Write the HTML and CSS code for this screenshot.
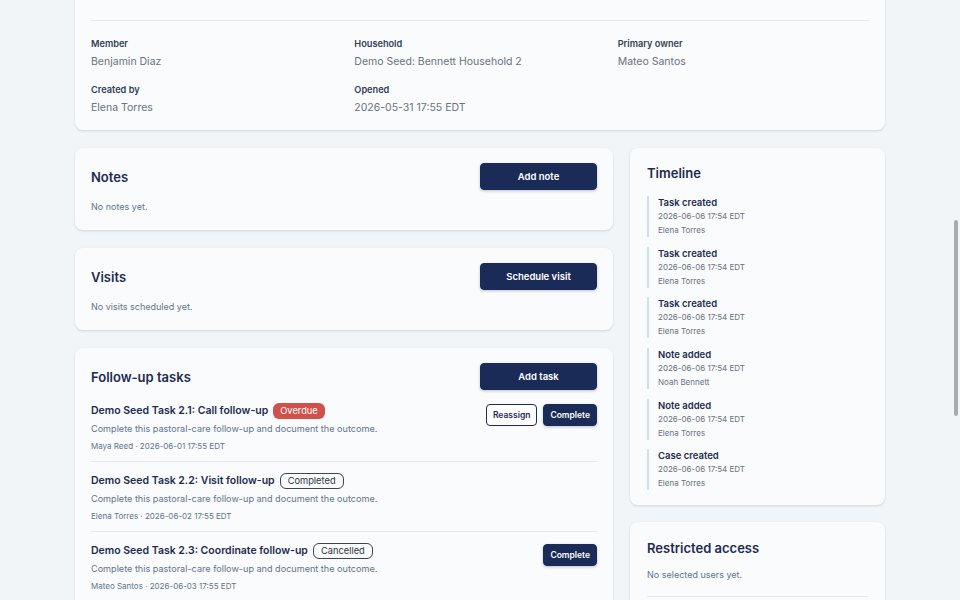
FILE: index.html
```html
<!DOCTYPE html>
<html>

<head>
  <title>Case - Benjamin Diaz</title>
  <link rel="stylesheet" href="styles.css">
</head>

<body>
  <div class="page">
    <div class="crumbs">Pastoral care / Cases / Benjamin Diaz</div>

    <div class="card case-card">
      <div class="case-head">
        <div>
          <h1 class="case-title">Follow-up for Benjamin Diaz</h1>
          <p class="case-sub">Pastoral care case opened after a recent hospital stay.</p>
        </div>
        <span class="pill pill-outline">Open</span>
      </div>
      <hr class="case-divider">
      <div class="details">
        <div class="field">
          <div class="field-label">Member</div>
          <div class="field-value">Benjamin Diaz</div>
        </div>
        <div class="field">
          <div class="field-label">Household</div>
          <div class="field-value">Demo Seed: Bennett Household 2</div>
        </div>
        <div class="field">
          <div class="field-label">Primary owner</div>
          <div class="field-value">Mateo Santos</div>
        </div>
        <div class="field">
          <div class="field-label">Created by</div>
          <div class="field-value">Elena Torres</div>
        </div>
        <div class="field">
          <div class="field-label">Opened</div>
          <div class="field-value">2026-05-31 17:55 EDT</div>
        </div>
      </div>
    </div>

    <div class="columns">
      <div class="col">
        <div class="card section">
          <div class="section-head">
            <h2>Notes</h2>
            <button class="btn btn-primary btn-wide">Add note</button>
          </div>
          <p class="empty">No notes yet.</p>
        </div>

        <div class="card section">
          <div class="section-head">
            <h2>Visits</h2>
            <button class="btn btn-primary btn-wide">Schedule visit</button>
          </div>
          <p class="empty">No visits scheduled yet.</p>
        </div>

        <div class="card section">
          <div class="section-head">
            <h2>Follow-up tasks</h2>
            <button class="btn btn-primary btn-wide">Add task</button>
          </div>
          <ul class="tasks">
            <li class="task">
              <div class="task-main">
                <div class="task-title">Demo Seed Task 2.1: Call follow-up <span class="pill pill-red">Overdue</span></div>
                <div class="task-desc">Complete this pastoral-care follow-up and document the outcome.</div>
                <div class="task-meta">Maya Reed · 2026-06-01 17:55 EDT</div>
              </div>
              <div class="task-actions">
                <button class="btn btn-small btn-ghost">Reassign</button>
                <button class="btn btn-small btn-primary">Complete</button>
              </div>
            </li>
            <li class="task">
              <div class="task-main">
                <div class="task-title">Demo Seed Task 2.2: Visit follow-up <span class="pill pill-outline">Completed</span></div>
                <div class="task-desc">Complete this pastoral-care follow-up and document the outcome.</div>
                <div class="task-meta">Elena Torres · 2026-06-02 17:55 EDT</div>
              </div>
            </li>
            <li class="task">
              <div class="task-main">
                <div class="task-title">Demo Seed Task 2.3: Coordinate follow-up <span class="pill pill-outline">Cancelled</span></div>
                <div class="task-desc">Complete this pastoral-care follow-up and document the outcome.</div>
                <div class="task-meta">Mateo Santos · 2026-06-03 17:55 EDT</div>
              </div>
              <div class="task-actions">
                <button class="btn btn-small btn-primary">Complete</button>
              </div>
            </li>
            <li class="task">
              <div class="task-main">
                <div class="task-title">Demo Seed Task 2.4: Prayer follow-up <span class="pill pill-outline">Open</span></div>
                <div class="task-desc">Complete this pastoral-care follow-up and document the outcome.</div>
                <div class="task-meta">Noah Bennett · 2026-06-04 17:55 EDT</div>
              </div>
              <div class="task-actions">
                <button class="btn btn-small btn-ghost">Reassign</button>
                <button class="btn btn-small btn-primary">Complete</button>
              </div>
            </li>
          </ul>
        </div>
      </div>

      <div class="col">
        <div class="card side">
          <h2>Timeline</h2>
          <ul class="timeline">
            <li><strong>Task created</strong><span>2026-06-06 17:54 EDT</span><span>Elena Torres</span></li>
            <li><strong>Task created</strong><span>2026-06-06 17:54 EDT</span><span>Elena Torres</span></li>
            <li><strong>Task created</strong><span>2026-06-06 17:54 EDT</span><span>Elena Torres</span></li>
            <li><strong>Note added</strong><span>2026-06-06 17:54 EDT</span><span>Noah Bennett</span></li>
            <li><strong>Note added</strong><span>2026-06-06 17:54 EDT</span><span>Elena Torres</span></li>
            <li><strong>Case created</strong><span>2026-06-06 17:54 EDT</span><span>Elena Torres</span></li>
          </ul>
        </div>

        <div class="card side">
          <h2 class="side-title">Restricted access</h2>
          <p class="empty">No selected users yet.</p>
          <hr class="side-divider">
          <div class="field-label">Add user</div>
          <div class="select">Choose a user</div>
          <button class="btn btn-primary btn-full">Grant access</button>
        </div>
      </div>
    </div>
  </div>

  <div class="scroll-thumb"></div>

  <script>
    // keep the view where the details divider sits near the top
    const divider = document.querySelector('.case-divider');
    window.scrollTo(0, divider.getBoundingClientRect().top + window.scrollY - 20);
  </script>
</body>

</html>
```

FILE: styles.css
```css
html {
  scrollbar-width: none;
}

html::-webkit-scrollbar {
  display: none;
}

body {
  margin: 0;
  background-color: #f1f5f8;
  font-family: 'Inter', 'Noto Sans', sans-serif;
  color: #1e2b4f;
}

.page {
  width: 810px;
  margin: 0 auto;
  padding: 24px 0 300px;
}

.crumbs {
  font-size: 11px;
  color: #64748b;
  margin-bottom: 12px;
}

.card {
  background-color: #f9fbfc;
  border-radius: 8px;
  box-shadow: 0 1px 3px rgba(15, 23, 42, 0.1), 0 1px 2px rgba(15, 23, 42, 0.04);
}

/* case details */

.case-card {
  padding: 16px 16px 14px;
}

.case-head {
  display: flex;
  justify-content: space-between;
  align-items: flex-start;
}

.case-title {
  margin: 0;
  font-size: 20px;
  font-weight: 700;
}

.case-sub {
  margin: 6px 0 0;
  font-size: 12px;
  color: #64748b;
}

.case-divider {
  border: 0;
  border-top: 1px solid #e5eaf0;
  margin: 30px 0 16px;
}

.details {
  display: grid;
  grid-template-columns: repeat(3, minmax(0, 1fr));
  column-gap: 12px;
  row-gap: 13px;
}

.field-label {
  font-size: 9.2px;
  font-weight: 600;
  line-height: 14px;
  color: #334155;
}

.field-value {
  margin-top: 2px;
  font-size: 10.5px;
  line-height: 17px;
  color: #6b7280;
}

/* columns */

.columns {
  display: grid;
  grid-template-columns: minmax(0, 1fr) 255px;
  column-gap: 17px;
  margin-top: 18px;
  align-items: start;
}

.col {
  display: flex;
  flex-direction: column;
  gap: 18px;
}

.col+.col {
  gap: 17px;
}

.section {
  padding: 15px 16px 16px;
}

.section-head {
  display: flex;
  justify-content: space-between;
  align-items: center;
}

h2 {
  margin: 0;
  font-size: 13px;
  font-weight: 600;
  line-height: 18px;
  color: #1e2b4f;
}

.empty {
  margin: 10px 0 0;
  font-size: 9px;
  line-height: 14px;
  color: #64748b;
}

/* buttons */

.btn {
  font-family: inherit;
  font-weight: 600;
  border-radius: 4px;
  cursor: pointer;
}

.btn-primary {
  background-color: #1b2b58;
  border: 1px solid #1b2b58;
  color: #ffffff;
  box-shadow: 0 1px 3px rgba(15, 23, 42, 0.25);
}

.btn-ghost {
  background-color: #ffffff;
  border: 1px solid #1b2b58;
  color: #1b2b58;
}

.btn-wide {
  width: 117px;
  height: 27px;
  font-size: 9.5px;
}

.btn-small {
  height: 22px;
  padding: 0 6px;
  font-size: 8.5px;
}

.btn-full {
  width: 100%;
  height: 27px;
  font-size: 9.5px;
  margin-top: 10px;
}

/* tasks */

.tasks {
  list-style: none;
  margin: 2px 0 0;
  padding: 0;
}

.task {
  display: flex;
  justify-content: space-between;
  align-items: flex-start;
  padding: 10px 0 9px;
  border-bottom: 1px solid #e5eaf0;
}

.task-title {
  display: flex;
  align-items: center;
  gap: 5px;
  font-size: 10.5px;
  font-weight: 600;
  line-height: 18px;
  color: #1e2b4f;
}

.task-desc {
  margin-top: 2px;
  font-size: 9.1px;
  line-height: 14px;
  color: #64748b;
}

.task-meta {
  margin-top: 4px;
  font-size: 8px;
  line-height: 12px;
  color: #64748b;
}

.task-actions {
  display: flex;
  gap: 6px;
  margin-top: 2px;
}

.pill {
  display: inline-block;
  height: 16px;
  padding: 0 7px;
  border-radius: 6px;
  font-size: 9.3px;
  font-weight: 400;
  line-height: 16px;
  box-sizing: border-box;
}

.pill-red {
  background-color: #d0514b;
  color: #ffffff;
}

.pill-outline {
  border: 1px solid #3f4450;
  color: #2f3440;
  line-height: 14px;
}

/* sidebar */

.side {
  padding: 16px 17px 15px;
}

.timeline {
  list-style: none;
  margin: 14px 0 0;
  padding: 0;
}

.timeline li {
  display: flex;
  flex-direction: column;
  border-left: 2px solid #cfe0e6;
  padding-left: 9px;
  margin-bottom: 9.7px;
}

.timeline li:last-child {
  margin-bottom: 0;
}

.timeline strong {
  font-size: 9.5px;
  font-weight: 600;
  line-height: 14px;
  color: #1e2b4f;
}

.timeline span {
  font-size: 8px;
  line-height: 13px;
  color: #6b7280;
}

.timeline span+span {
  margin-top: 1px;
}

.side-title {
  line-height: 20px;
}

.side-divider {
  border: 0;
  border-top: 1px solid #e5eaf0;
  margin: 14px 0 12px;
}

.select {
  margin-top: 4px;
  height: 26px;
  border: 1px solid #cbd5e1;
  border-radius: 4px;
  background-color: #ffffff;
  font-size: 10px;
  line-height: 26px;
  padding: 0 8px;
  color: #64748b;
}

/* overlay scrollbar thumb */

.scroll-thumb {
  position: fixed;
  top: 220px;
  right: 2px;
  width: 4px;
  height: 196px;
  border-radius: 2px;
  background-color: #a9acaf;
}
```
